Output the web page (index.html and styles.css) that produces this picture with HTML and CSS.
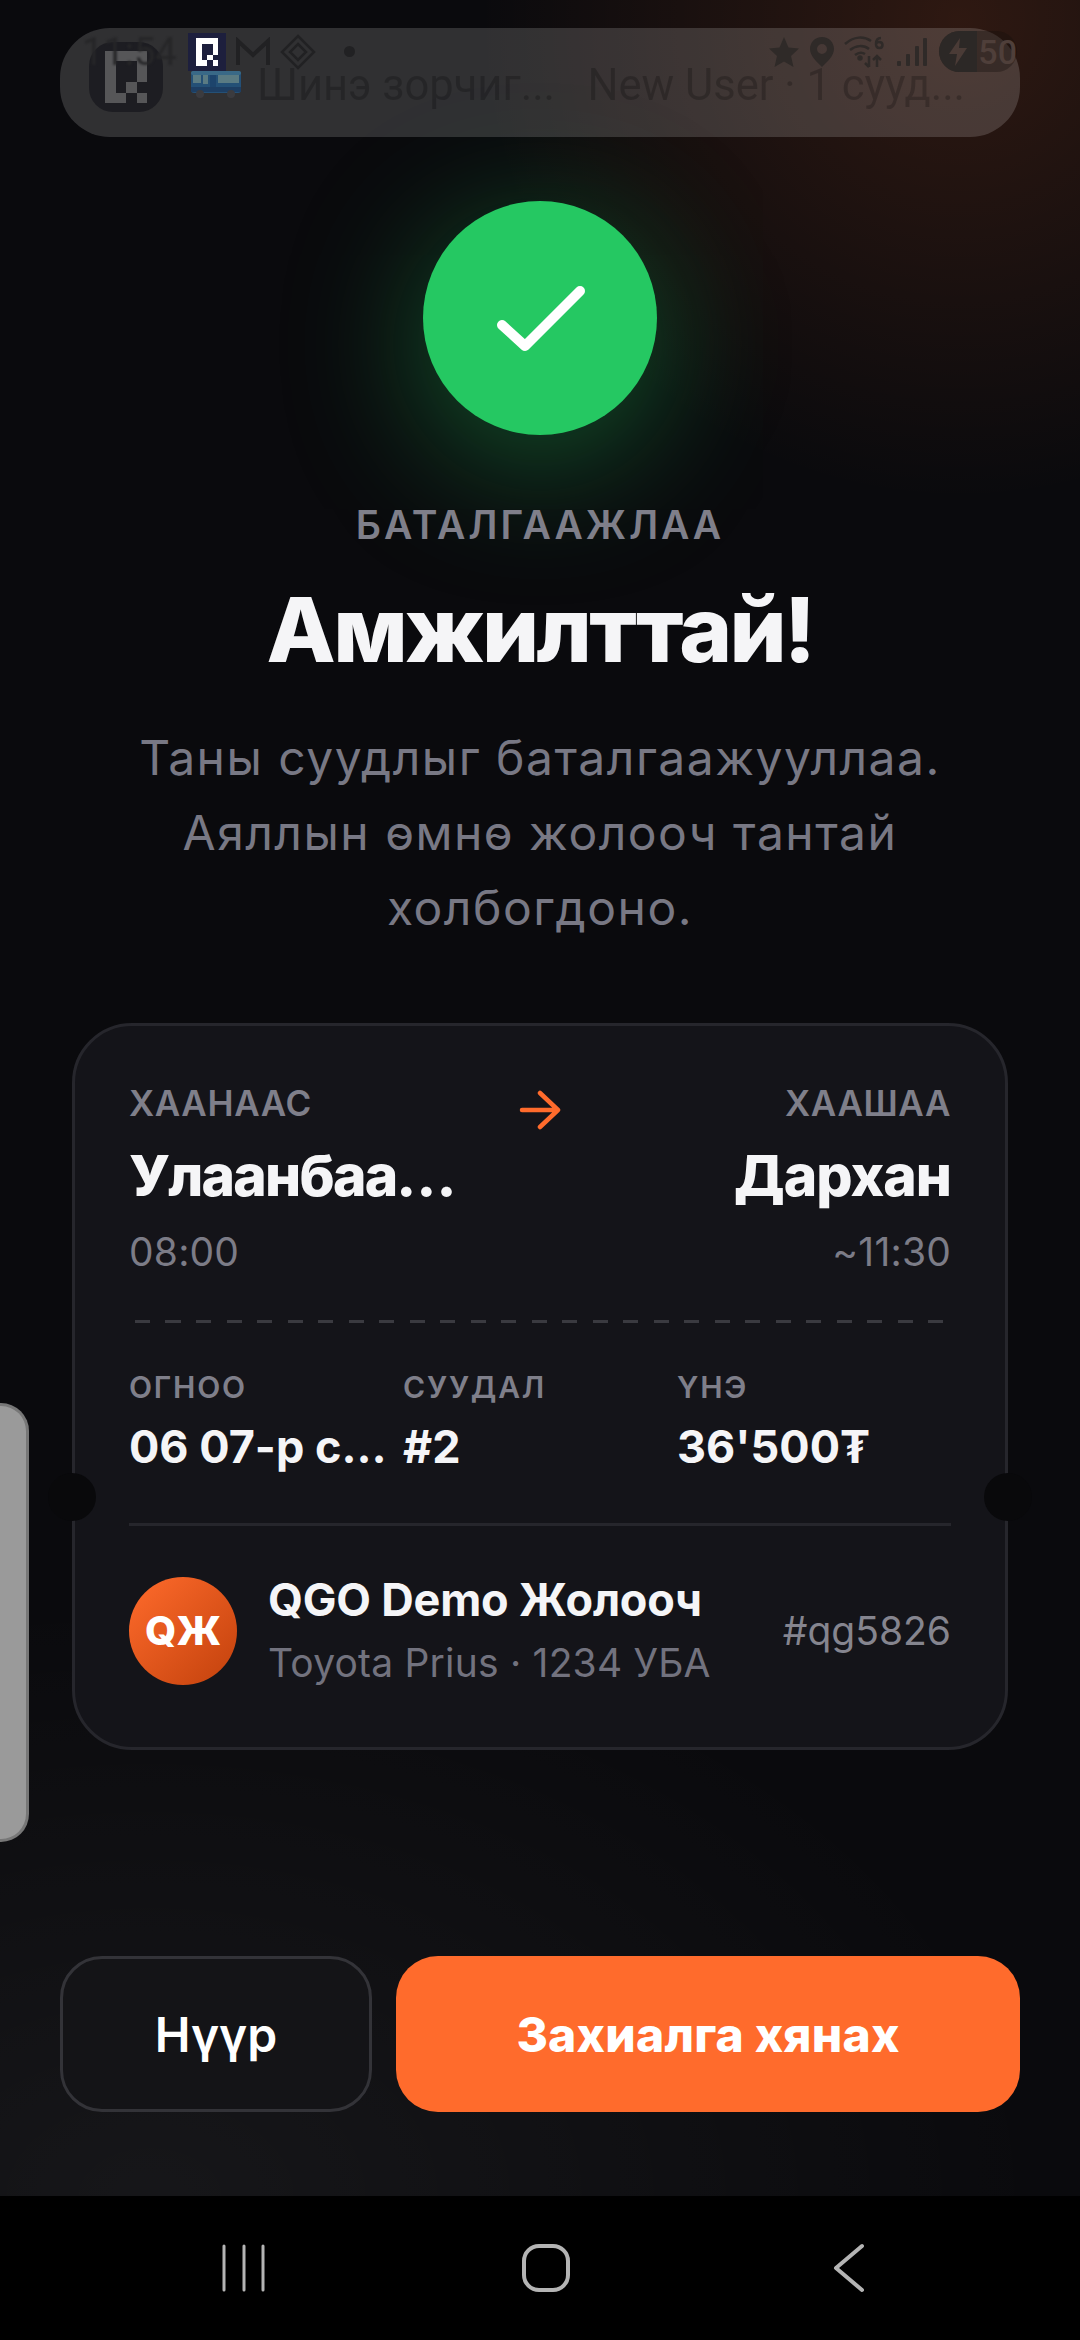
FILE: index.html
```html
<!DOCTYPE html>
<html lang="mn">
<head>
    <meta charset="UTF-8">
    <meta name="viewport" content="width=device-width, initial-scale=1.0">
    <title>Амжилттай</title>
    <link rel="stylesheet" href="styles.css">
</head>
<body>
    <svg class="defs" width="0" height="0">
        <symbol id="qgoLogo" viewBox="0 0 4 5" shape-rendering="crispEdges">
            <path d="M0 0H4V3H3V1H1V4H2V5H0Z"/>
            <rect x="2" y="3" width="1" height="1"/>
            <rect x="3" y="4" width="1" height="1"/>
        </symbol>
    </svg>

    <main class="screen">
        <!-- Амжилтын тэмдэг -->
        <div class="check-circle">
            <svg class="check-icon" viewBox="0 0 100 80" fill="none" stroke="#fff" stroke-width="10" stroke-linecap="round" stroke-linejoin="round">
                <path d="M12 47L35 68L90 13"/>
            </svg>
        </div>

        <div class="eyebrow">БАТАЛГААЖЛАА</div>
        <h1 class="title">Амжилттай!</h1>
        <p class="desc">Таны суудлыг баталгаажууллаа.<br>Аяллын өмнө жолооч тантай<br>холбогдоно.</p>

        <!-- Тасалбар -->
        <section class="ticket">
            <span class="notch notch-left"></span>
            <span class="notch notch-right"></span>

            <div class="route">
                <div class="route-side">
                    <div class="route-label">ХААНААС</div>
                    <div class="route-city route-city-from">Улаанбаа…</div>
                    <div class="route-time">08:00</div>
                </div>
                <svg class="route-arrow" viewBox="0 0 42 40" fill="none" stroke="#ff6b2c" stroke-width="4.5" stroke-linecap="round" stroke-linejoin="round">
                    <path d="M3 20H39M21 3L39 20L21 37"/>
                </svg>
                <div class="route-side route-side-end">
                    <div class="route-label">ХААШАА</div>
                    <div class="route-city">Дархан</div>
                    <div class="route-time">~11:30</div>
                </div>
            </div>

            <div class="dashes"></div>

            <div class="stats">
                <div>
                    <div class="stat-label">ОГНОО</div>
                    <div class="stat-value">06 07-р с…</div>
                </div>
                <div>
                    <div class="stat-label">СУУДАЛ</div>
                    <div class="stat-value">#2</div>
                </div>
                <div>
                    <div class="stat-label">ҮНЭ</div>
                    <div class="stat-value">36'500₮</div>
                </div>
            </div>

            <div class="driver">
                <div class="avatar">QЖ</div>
                <div class="driver-info">
                    <div class="driver-name">QGO Demo Жолооч</div>
                    <div class="driver-car">Toyota Prius · 1234 УБА</div>
                </div>
                <div class="driver-code">#qg5826</div>
            </div>
        </section>

        <div class="actions">
            <button class="btn btn-ghost" type="button">Нүүр</button>
            <button class="btn btn-primary" type="button">Захиалга хянах</button>
        </div>
    </main>

    <!-- Системийн навигаци -->
    <nav class="nav-bar">
        <svg class="nav-icon" viewBox="0 0 50 50" fill="none" stroke="#b4b4b4" stroke-width="3" stroke-linecap="round">
            <path d="M5 3V47M25 3V47M44 3V47"/>
        </svg>
        <svg class="nav-icon" viewBox="0 0 50 50" fill="none" stroke="#b4b4b4" stroke-width="4">
            <rect x="3" y="3" width="44" height="44" rx="15"/>
        </svg>
        <svg class="nav-icon" viewBox="0 0 50 50" fill="none" stroke="#b4b4b4" stroke-width="4" stroke-linecap="round" stroke-linejoin="round">
            <path d="M39 3L13 25L39 47"/>
        </svg>
    </nav>

    <!-- Мэдэгдлийн хөшиг -->
    <div class="banner">
        <div class="banner-logo">
            <svg class="banner-logo-mark"><use href="#qgoLogo"/></svg>
        </div>
        <svg class="bus" viewBox="0 0 52 28">
            <rect x="1" y="1" width="50" height="22" rx="3" fill="#24527a"/>
            <rect x="1" y="1" width="50" height="4" rx="2" fill="#3a6d8c"/>
            <rect x="3" y="5" width="8" height="8" fill="#5d8088"/>
            <rect x="13" y="5" width="5" height="9" fill="#5d8088"/>
            <rect x="20" y="5" width="6" height="16" fill="#1d4670"/>
            <rect x="28" y="5" width="21" height="8" fill="#5d8088"/>
            <rect x="1" y="17" width="50" height="5" fill="#1d3f66"/>
            <circle cx="10" cy="24" r="4" fill="#3c3c40"/>
            <circle cx="41" cy="24" r="4" fill="#3c3c40"/>
        </svg>
        <div class="banner-text">Шинэ зорчиг...&nbsp;&nbsp; New User · 1 сууд...</div>
    </div>

    <!-- Статус мөр -->
    <div class="status-bar">
        <span class="status-time">11:54</span>
        <span class="status-app">
            <svg class="status-app-mark"><use href="#qgoLogo"/></svg>
        </span>
        <svg class="status-icon" width="36" height="30" viewBox="0 0 36 30" fill="none" stroke="#212123" stroke-width="4">
            <path d="M3 28V4L18 18L33 4V28"/>
        </svg>
        <svg class="status-icon" width="36" height="36" viewBox="0 0 36 36" fill="none" stroke="#212123" stroke-width="2.5">
            <path d="M18 2L34 18L18 34L2 18Z"/>
            <path d="M18 10L26 18L18 26L10 18Z"/>
        </svg>
        <span class="status-dot"></span>
        <span class="status-spacer"></span>
        <svg class="status-icon" width="32" height="32" viewBox="0 0 32 32" fill="#2f2a28">
            <path d="M16 1L20.500 11.500L31 12.500L23 20L25.500 31L16 25.500L6.500 31L9 20L1 12.500L11.500 11.500Z"/>
        </svg>
        <svg class="status-icon" width="26" height="32" viewBox="0 0 26 32" fill="#2f2a28">
            <path fill-rule="evenodd" d="M13 1C6 1 1 6.500 1 13C1 20 8 26 13 31C18 26 25 20 25 13C25 6.500 20 1 13 1ZM13 8A5 5 0 1 1 13 18A5 5 0 1 1 13 8Z"/>
        </svg>
        <svg class="status-icon" width="44" height="32" viewBox="0 0 44 32" fill="none" stroke="#2f2a28" stroke-width="2.5">
            <path d="M1 8C10 0 20 0 27 5M6 14C12 9 20 9 25 13M11 19C15 16 18 16 21 18"/>
            <circle cx="16" cy="22" r="1.500" fill="#2f2a28"/>
            <path d="M25 20V31M21 27L25 31M33 31V20M29 24L33 20L37 24"/>
            <path d="M37 2C33 2 32 5 32 8C32 11 34 12 35.500 12C37.500 12 38.500 10.500 38.500 9C38.500 7 37 6 35 6C33.500 6 32.500 7 32 8"/>
        </svg>
        <svg class="status-icon" width="30" height="30" viewBox="0 0 30 30" fill="#2f2a28">
            <rect x="0" y="24" width="4" height="5" rx="1"/>
            <rect x="9" y="17" width="4" height="12" rx="1"/>
            <rect x="18" y="9" width="4" height="20" rx="1"/>
            <rect x="26" y="1" width="4" height="28" rx="1"/>
        </svg>
        <span class="battery">
            <span class="battery-fill">
                <svg width="20" height="30" viewBox="0 0 20 30" fill="#4a3b36"><path d="M12 1L1 17H9L7 29L19 11H11Z"/></svg>
            </span>
            <span class="battery-num">50</span>
        </span>
    </div>

    <div class="edge-panel"></div>
</body>
</html>
```

FILE: styles.css
```css
/* Ерөнхий */
* {
    box-sizing: border-box;
}

html, body {
    margin: 0;
    padding: 0;
}

body {
    position: relative;
    width: 1080px;
    height: 2340px;
    overflow: hidden;
    background: #000;
    color: #f5f5f7;
    font-family: Inter, "Noto Sans", sans-serif;
}

.defs {
    position: absolute;
}

.screen {
    height: 2196px;
    padding-top: 201px;
    display: flex;
    flex-direction: column;
    align-items: center;
    background:
        radial-gradient(circle 480px at 960px 20px, rgba(255, 107, 44, 0.15), transparent),
        radial-gradient(ellipse 900px 600px at 150px 2196px, rgba(255, 255, 255, 0.05), transparent),
        #0a0a0d;
}

/* Тэмдэг */
.check-circle {
    width: 234px;
    height: 234px;
    flex: none;
    border-radius: 50%;
    background: #25c862;
    box-shadow: 0 26px 140px rgba(34, 197, 94, 0.42);
    display: flex;
    align-items: center;
    justify-content: center;
}

.check-icon {
    width: 100px;
    height: 80px;
}

.eyebrow {
    margin-top: 66px;
    font-size: 39px;
    line-height: 48px;
    font-weight: 600;
    letter-spacing: 2.9px;
    color: #7f7f8a;
}

.title {
    margin: 26px 0 0;
    font-size: 90px;
    line-height: 110px;
    font-weight: 800;
    letter-spacing: -2.7px;
}

.desc {
    margin: 35px 0 0;
    font-size: 48px;
    line-height: 75px;
    letter-spacing: 1.5px;
    text-align: center;
    color: #787884;
}

/* Тасалбар */
.ticket {
    position: relative;
    width: 936px;
    margin-top: 78px;
    padding: 57px 54px 60px;
    background: #141419;
    border: 3px solid #26262c;
    border-radius: 60px;
}

.notch {
    position: absolute;
    top: 447px;
    width: 48px;
    height: 48px;
    border-radius: 50%;
    background: #09090b;
}

.notch-left {
    left: -27px;
}

.notch-right {
    right: -27px;
}

.route {
    display: flex;
    align-items: flex-start;
}

.route-side {
    flex: 1;
    min-width: 0;
}

.route-side-end {
    text-align: right;
}

.route-arrow {
    width: 42px;
    height: 40px;
    flex: none;
    margin-top: 7px;
}

.route-label {
    font-size: 35px;
    line-height: 40px;
    font-weight: 600;
    letter-spacing: 0.6px;
    color: #7f7f8a;
}

.route-city {
    margin-top: 17px;
    font-size: 57px;
    line-height: 72px;
    font-weight: 800;
    letter-spacing: -1px;
}

.route-city-from {
    letter-spacing: -1.8px;
}

.route-time {
    margin-top: 16px;
    font-size: 39px;
    line-height: 48px;
    letter-spacing: 0.2px;
    color: #7c7c87;
}

.dashes {
    height: 3px;
    margin: 44px 6px 0;
    background: repeating-linear-gradient(90deg, #3a3a40 0 15.3px, transparent 15.3px 30.5px);
}

.stats {
    display: grid;
    grid-template-columns: repeat(3, 1fr);
    margin-top: 46px;
}

.stat-label {
    font-size: 30px;
    line-height: 36px;
    font-weight: 600;
    letter-spacing: 1.8px;
    color: #7f7f8a;
}

.stat-value {
    margin-top: 14px;
    font-size: 45px;
    line-height: 56px;
    font-weight: 700;
}

.driver {
    display: flex;
    align-items: center;
    margin-top: 48px;
    padding-top: 48px;
    border-top: 3px solid #26262c;
}

.avatar {
    width: 108px;
    height: 108px;
    flex: none;
    border-radius: 50%;
    background: linear-gradient(135deg, #ff6b2c, #c2410c);
    display: flex;
    align-items: center;
    justify-content: center;
    font-size: 40px;
    font-weight: 800;
    color: #fff;
}

.driver-info {
    flex: 1;
    min-width: 0;
    margin-left: 31px;
}

.driver-name {
    font-size: 45px;
    line-height: 52px;
    font-weight: 700;
    letter-spacing: -0.2px;
}

.driver-car {
    margin-top: 13px;
    font-size: 39px;
    line-height: 48px;
    letter-spacing: 0.2px;
    color: #72727e;
}

.driver-code {
    font-size: 39px;
    line-height: 48px;
    color: #85858f;
}

/* Товчнууд */
.actions {
    width: 100%;
    margin-top: auto;
    padding: 0 60px 84px;
    display: grid;
    grid-template-columns: 1fr 2fr;
    gap: 24px;
}

.btn {
    height: 156px;
    padding: 0;
    border-radius: 42px;
    font-family: inherit;
    font-size: 48px;
    color: #fff;
}

.btn-ghost {
    background: #141417;
    border: 3px solid #333338;
    font-weight: 600;
}

.btn-primary {
    background: #ff6b2c;
    border: none;
    font-weight: 800;
    letter-spacing: 0.2px;
}

/* Навигаци */
.nav-bar {
    height: 144px;
    background: #000;
    padding-left: 12px;
    display: flex;
    align-items: center;
    justify-content: center;
    gap: 252px;
}

.nav-icon {
    width: 50px;
    height: 50px;
}

/* Мэдэгдлийн хөшиг */
.banner {
    position: absolute;
    left: 60px;
    top: 28px;
    width: 960px;
    height: 109px;
    border-radius: 50px;
    background: rgba(255, 255, 255, 0.155);
    display: flex;
    align-items: center;
    padding-left: 29px;
}

.banner-logo {
    width: 74px;
    height: 70px;
    flex: none;
    margin-top: -12px;
    border-radius: 24px;
    background: #1d1d22;
    display: flex;
    align-items: center;
    justify-content: center;
}

.banner-logo-mark {
    width: 42px;
    height: 54px;
    fill: #565658;
}

.bus {
    width: 52px;
    height: 28px;
    flex: none;
    margin: 2px 0 0 27px;
    opacity: 0.95;
}

.banner-text {
    margin: 6px 0 0 15px;
    font-family: Roboto, sans-serif;
    font-size: 43.500px;
    white-space: nowrap;
    color: rgba(0, 0, 0, 0.22);
    filter: blur(0.6px);
}

/* Статус мөр */
.status-bar {
    position: absolute;
    left: 82px;
    top: 31px;
    width: 935px;
    height: 41px;
    display: flex;
    align-items: center;
}

.status-time {
    width: 106px;
    font-family: Roboto, sans-serif;
    font-size: 38px;
    color: #262628;
    filter: blur(0.8px);
}

.status-app {
    width: 38px;
    height: 38px;
    background: #1d1f3d;
    display: flex;
    align-items: center;
    justify-content: center;
}

.status-app-mark {
    width: 22px;
    height: 28px;
    fill: #fff;
}

.status-icon {
    flex: none;
    margin-left: 9px;
}

.status-dot {
    width: 11px;
    height: 11px;
    margin-left: 28px;
    border-radius: 50%;
    background: #212123;
}

.status-spacer {
    flex: 1;
}

.battery {
    width: 78px;
    height: 41px;
    margin-left: 12px;
    border-radius: 21px;
    background: rgba(20, 14, 12, 0.35);
    display: flex;
    align-items: center;
    overflow: hidden;
}

.battery-fill {
    width: 39px;
    height: 41px;
    background: #2c2826;
    display: flex;
    align-items: center;
    justify-content: center;
}

.battery-num {
    margin-left: 1px;
    font-family: Roboto, sans-serif;
    font-size: 34px;
    font-weight: 500;
    color: #4f3f3a;
}

/* Хажуугийн самбар */
.edge-panel {
    position: absolute;
    left: 0;
    top: 1403px;
    width: 29px;
    height: 439px;
    background: #9a9a9a;
    border: 3px solid #777;
    border-left: none;
    border-radius: 0 28px 28px 0;
}
```
